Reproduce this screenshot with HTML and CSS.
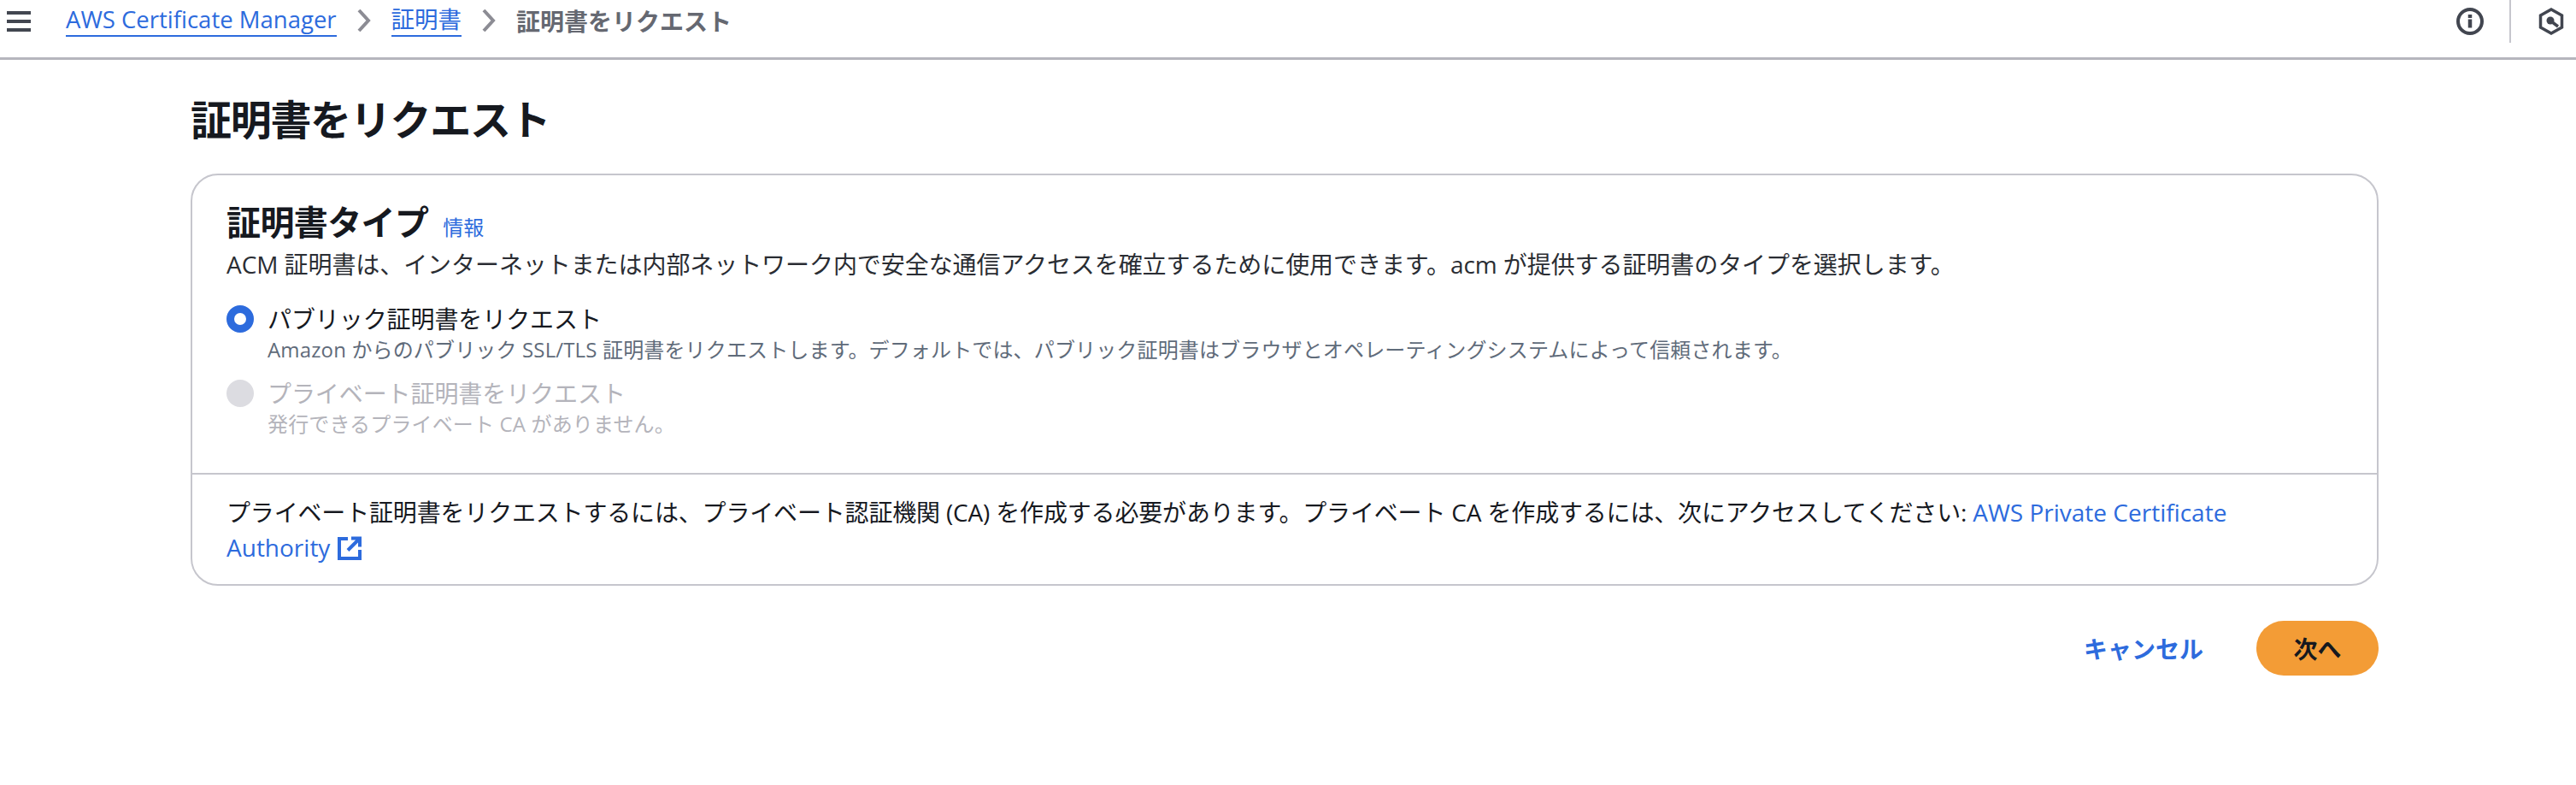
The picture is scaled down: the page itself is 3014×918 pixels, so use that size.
FILE: index.html
```html
<!DOCTYPE html>
<html lang="ja">
<head>
    <meta charset="UTF-8">
    <title>証明書をリクエスト</title>
    <link rel="stylesheet" href="styles.css">
</head>
<body>
    <header class="topbar">
        <svg class="menu-icon" width="28" height="24" viewBox="0 0 28 24"><path d="M0 2h28M0 12h28M0 22h28" stroke="#424650" stroke-width="4" fill="none"/></svg>
        <nav class="crumbs">
            <a class="crumb-link" href="#">AWS Certificate Manager</a>
            <svg class="crumb-sep" width="16" height="26" viewBox="0 0 16 26"><path d="M2 1l11 12L2 25" stroke="#8c8c94" stroke-width="4" fill="none"/></svg>
            <a class="crumb-link" href="#">証明書</a>
            <svg class="crumb-sep" width="16" height="26" viewBox="0 0 16 26"><path d="M2 1l11 12L2 25" stroke="#8c8c94" stroke-width="4" fill="none"/></svg>
            <span class="crumb-current">証明書をリクエスト</span>
        </nav>
        <div class="topbar-tools">
            <svg width="32" height="32" viewBox="0 0 32 32"><circle cx="16" cy="16" r="14" stroke="#424650" stroke-width="4" fill="none"/><path d="M16 13.500v10M16 8v4" stroke="#424650" stroke-width="4.500" fill="none"/></svg>
            <span class="tools-divider"></span>
            <svg width="30" height="32" viewBox="0 0 30 32"><path d="M15 2l12.500 7v14L15 30 2.500 23V9z" stroke="#424650" stroke-width="3.500" fill="none"/><circle cx="14" cy="15" r="4.500" fill="#424650"/><path d="M15 16l8 6" stroke="#424650" stroke-width="3.500"/></svg>
        </div>
    </header>

    <main class="content">
        <h1 class="page-title">証明書をリクエスト</h1>

        <section class="card">
            <div class="card-body">
                <h2 class="card-title">証明書タイプ <a class="info-link" href="#">情報</a></h2>
                <p class="card-desc">ACM 証明書は、インターネットまたは内部ネットワーク内で安全な通信アクセスを確立するために使用できます。acm が提供する証明書のタイプを選択します。</p>

                <div class="radio-row">
                    <span class="radio radio-on"></span>
                    <div>
                        <div class="radio-label">パブリック証明書をリクエスト</div>
                        <div class="radio-sub">Amazon からのパブリック SSL/TLS 証明書をリクエストします。デフォルトでは、パブリック証明書はブラウザとオペレーティングシステムによって信頼されます。</div>
                    </div>
                </div>
                <div class="radio-row disabled">
                    <span class="radio radio-off"></span>
                    <div>
                        <div class="radio-label">プライベート証明書をリクエスト</div>
                        <div class="radio-sub">発行できるプライベート CA がありません。</div>
                    </div>
                </div>
            </div>
            <div class="card-footer">
                プライベート証明書をリクエストするには、プライベート認証機関 (CA) を作成する必要があります。プライベート CA を作成するには、次にアクセスしてください: <a class="ext-link" href="#">AWS Private Certificate Authority <svg class="ext-icon" width="28" height="28" viewBox="0 0 28 28"><path d="M12 3H2v23h24V16" stroke="#2d6bdd" stroke-width="4" fill="none"/><path d="M16 2.500h10v10M25 3.500L12 16.500" stroke="#2d6bdd" stroke-width="4" fill="none"/></svg></a>
            </div>
        </section>

        <div class="actions">
            <a class="cancel-link" href="#">キャンセル</a>
            <button class="next-btn">次へ</button>
        </div>
    </main>
</body>
</html>
```

FILE: styles.css
```css
body {
    margin: 0;
    background: #ffffff;
    color: #16191f;
    font-family: "Open Sans", "Noto Sans CJK JP", sans-serif;
    font-size: 28px;
}

a {
    color: #2d6bdd;
    text-decoration: none;
}

.topbar {
    display: flex;
    align-items: center;
    height: 67px;
    padding: 0 14px 0 8px;
    border-bottom: 3px solid #b6b6bd;
}

.menu-icon {
    margin-top: -18px;
}

.crumbs {
    display: flex;
    align-items: center;
    gap: 24px;
    margin-left: 41px;
    margin-top: -20px;
    font-size: 27.500px;
}

.crumb-link {
    border-bottom: 2px solid #2d6bdd;
    line-height: 36px;
}

.crumb-current {
    color: #656871;
    font-size: 28px;
    font-weight: 700;
}

.topbar-tools {
    display: flex;
    align-items: center;
    margin-left: auto;
    margin-top: -17px;
}

.tools-divider {
    width: 2px;
    height: 50px;
    margin: 0 32px 0 30px;
    background: #c6c6cd;
}

.content {
    width: 2560px;
    margin-left: 223px;
}

.page-title {
    margin: 0;
    padding-top: 40px;
    height: 93px;
    font-size: 48px;
    letter-spacing: -1.300px;
    line-height: 60px;
    font-weight: 700;
}

.card {
    height: 478px;
    border: 2px solid #c6c6cd;
    border-radius: 32px;
    display: flex;
    flex-direction: column;
}

.card-body {
    height: 350px;
    padding: 32px 40px 0;
    border-bottom: 2px solid #c6c6cd;
    box-sizing: border-box;
}

.card-title {
    margin: 0;
    font-size: 40px;
    letter-spacing: -0.600px;
    line-height: 46px;
    font-weight: 700;
}

.info-link {
    font-size: 24px;
    font-weight: 400;
    letter-spacing: 0;
    margin-left: 7px;
}

.card-desc {
    margin: 0 0 24px;
    line-height: 40px;
    letter-spacing: -0.070px;
    color: #2a2d33;
}

.radio-row {
    display: flex;
    gap: 16px;
    margin-bottom: 15px;
}

.radio {
    flex: none;
    width: 32px;
    height: 32px;
    margin-top: 4px;
    border-radius: 50%;
    box-sizing: border-box;
}

.radio-on {
    border: 9px solid #2d6bdd;
    background: #ffffff;
}

.radio-off {
    background: #dcdce1;
}

.radio-label {
    line-height: 40px;
    letter-spacing: -0.080px;
}

.radio-sub {
    font-size: 24px;
    line-height: 32px;
    letter-spacing: 0.150px;
    color: #5f6b7a;
}

.disabled .radio-label,
.disabled .radio-sub {
    color: #b4b4bb;
}

.card-footer {
    padding: 24px 140px 0 40px;
    line-height: 41px;
    letter-spacing: -0.170px;
}

.ext-link {
    font-weight: 500;
    letter-spacing: 0;
}

.ext-icon {
    vertical-align: -4px;
    margin-left: 1px;
}

.actions {
    display: flex;
    align-items: center;
    justify-content: flex-end;
    gap: 62px;
    margin-top: 41px;
}

.cancel-link {
    font-weight: 700;
}

.next-btn {
    width: 143px;
    height: 64px;
    border: none;
    border-radius: 32px;
    background: #f39c36;
    color: #16191f;
    font-family: inherit;
    font-size: 28px;
    font-weight: 700;
}
```
